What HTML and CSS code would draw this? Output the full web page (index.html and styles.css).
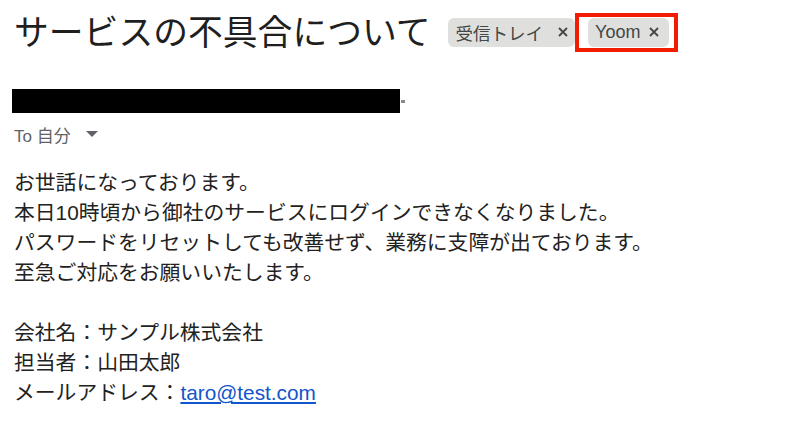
FILE: index.html
```html
<!DOCTYPE html>
<html lang="ja">
<head>
    <meta charset="UTF-8">
    <meta name="viewport" content="width=device-width, initial-scale=1.0">
    <title>サービスの不具合について</title>
    <link rel="stylesheet" href="styles.css">
</head>
<body>
    <div class="mail">
        <div class="subject-row">
            <h1 class="subject">サービスの不具合について</h1>
            <span class="label label-inbox">
                <span class="label-text-ja">受信トレイ</span>
                <svg class="label-x" width="10" height="10" viewBox="0 0 10 10"><path d="M1 1l8 8M9 1L1 9" stroke="#454746" stroke-width="1.8"/></svg>
            </span>
            <span class="highlight">
                <span class="label label-yoom">
                    Yoom
                    <svg class="label-x" width="10" height="10" viewBox="0 0 10 10"><path d="M1 1l8 8M9 1L1 9" stroke="#454746" stroke-width="1.8"/></svg>
                </span>
            </span>
        </div>

        <div class="sender">
            <span class="redacted"></span>
            <span class="sender-arrow"></span>
        </div>

        <div class="recipients">
            To 自分
            <svg class="caret" width="12" height="6" viewBox="0 0 12 6"><path d="M0 0h12L6 6z" fill="#5f6368"/></svg>
        </div>

        <div class="message">
            <p>お世話になっております。</p>
            <p>本日10時頃から御社のサービスにログインできなくなりました。</p>
            <p>パスワードをリセットしても改善せず、業務に支障が出ております。</p>
            <p>至急ご対応をお願いいたします。</p>
            <p>&nbsp;</p>
            <p>会社名：サンプル株式会社</p>
            <p>担当者：山田太郎</p>
            <p>メールアドレス：<a href="mailto:taro@test.com">taro@test.com</a></p>
        </div>
    </div>
</body>
</html>
```

FILE: styles.css
```css
body {
    margin: 0;
    background: #fff;
    color: #222;
    font-family: "Liberation Sans", Arial, "Noto Sans CJK JP", sans-serif;
}

.mail {
    padding: 0 0 0 14px;
}

.subject-row {
    display: flex;
    align-items: center;
    padding-top: 13px;
    height: 38px;
    white-space: nowrap;
}

.subject {
    margin: -4px 17px 0 0;
    font-size: 34.8px;
    font-weight: 400;
    line-height: 38px;
    color: #1f1f1f;
    font-family: "Noto Sans CJK JP", sans-serif;
}

.label {
    display: inline-flex;
    flex-shrink: 0;
    align-items: center;
    height: 29px;
    border-radius: 6px;
    background: #dfe0dd;
    color: #444746;
    font-size: 18px;
}

.label-inbox {
    padding: 0 7px 0 8px;
}

.label-text-ja {
    font-size: 17.5px;
}

.label-inbox .label-x {
    margin-left: 15px;
}

.label-yoom {
    padding: 0 10px 0 7px;
}

.label-yoom .label-x {
    margin-left: 9px;
}

/* red box drawn round the Yoom label */
.highlight {
    display: inline-flex;
    flex-shrink: 0;
    padding: 1px 5px 1px 9px;
    border: 4px solid #f21d00;
}

.sender {
    display: flex;
    align-items: center;
    margin-top: 38px;
    height: 24px;
}

.redacted {
    display: block;
    width: 388px;
    height: 24px;
    margin-left: -2px;
    background: #000;
}

.sender-arrow {
    width: 4px;
    height: 3px;
    margin-left: 1px;
    background: #8a8a8a;
}

.recipients {
    display: flex;
    align-items: center;
    margin-top: 9px;
    height: 24px;
    font-size: 17px;
    color: #5f6368;
}

.caret {
    margin-left: 15px;
}

.message {
    margin-top: 22px;
    font-size: 20.8px;
    line-height: 30px;
    color: #222;
}

.message p {
    margin: 0;
}

.message a {
    color: #1155cc;
}
```
